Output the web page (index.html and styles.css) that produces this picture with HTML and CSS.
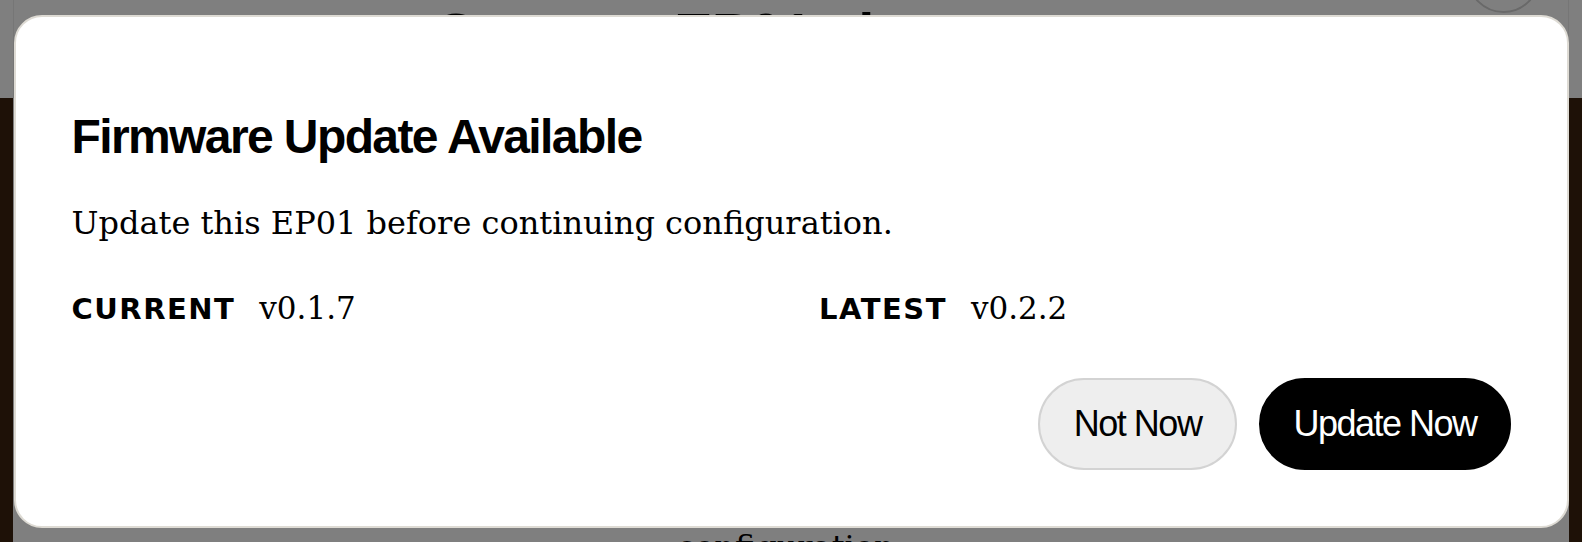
FILE: index.html
```html
<!DOCTYPE html>
<html lang="en">
<head>
<meta charset="utf-8">
<title>Firmware Update Available</title>
<link rel="stylesheet" href="styles.css">
</head>
<body>
<div class="page">
  <header class="page-head">
    <div class="page-head-inner">
      <h1 class="page-title">Connect EP01 via app now</h1>
      <span class="page-close"></span>
    </div>
  </header>
  <main class="page-body">
    <div class="panel">
      <p class="panel-text">configuration.</p>
    </div>
  </main>
</div>

<div class="overlay">
  <section class="modal" role="dialog" aria-labelledby="fw-title">
    <h2 class="modal-title" id="fw-title">Firmware Update Available</h2>
    <p class="modal-text">Update this EP01 before continuing configuration.</p>
    <div class="versions">
      <div class="version">
        <span class="version-label">CURRENT</span>
        <span class="version-value">v0.1.7</span>
      </div>
      <div class="version">
        <span class="version-label">LATEST</span>
        <span class="version-value">v0.2.2</span>
      </div>
    </div>
    <div class="actions">
      <button class="btn btn-secondary" type="button">Not Now</button>
      <button class="btn btn-primary" type="button">Update Now</button>
    </div>
  </section>
</div>
</body>
</html>
```
FILE: styles.css
```css
html, body {
  margin: 0;
  padding: 0;
  height: 100%;
  overflow: hidden;
}

body {
  background: #3c230f;
  font-family: "Liberation Sans", Arial, sans-serif;
  color: #000;
}

.page {
  height: 542px;
  display: flex;
  flex-direction: column;
}

.page-head {
  height: 98px;
  flex: none;
  background: #fff;
  padding: 0 13px;
  box-sizing: border-box;
}

.page-head-inner {
  position: relative;
  height: 100%;
  border-left: 1px solid #ededed;
  border-right: 1px solid #ededed;
  text-align: center;
  overflow: hidden;
}

.page-title {
  margin: 0;
  padding-top: 5px;
  font-family: "Liberation Sans", Arial, sans-serif;
  font-weight: 700;
  font-size: 58px;
  line-height: 1;
  letter-spacing: -1px;
  white-space: nowrap;
}

.page-close {
  position: absolute;
  right: 28px;
  top: -60px;
  width: 73px;
  height: 73px;
  border: 2px solid #d2d2d2;
  border-radius: 50%;
  box-sizing: border-box;
}

.page-body {
  flex: 1;
  padding: 0 13px;
}

.panel {
  height: 100%;
  background: #fff;
  text-align: center;
}

.panel-text {
  margin: 0;
  padding-top: 428px;
  font-family: "DejaVu Serif", "Liberation Serif", serif;
  font-size: 32px;
  line-height: 42px;
}

.overlay {
  position: fixed;
  inset: 0;
  background: rgba(0, 0, 0, 0.5);
  display: flex;
  align-items: center;
  justify-content: center;
}

.modal {
  width: 1555px;
  box-sizing: border-box;
  background: #fff;
  border: 2px solid #dedbd4;
  border-radius: 28px;
  padding: 92px 56px 56px;
}

.modal-title {
  margin: 0;
  font-family: "Liberation Sans", Arial, sans-serif;
  font-weight: 700;
  font-size: 48px;
  line-height: 56px;
  letter-spacing: -1.6px;
}

.modal-text {
  margin: 37px 0 0;
  font-family: "DejaVu Serif", "Liberation Serif", serif;
  font-size: 32px;
  line-height: 42px;
}

.versions {
  margin-top: 43px;
  display: grid;
  grid-template-columns: 1fr 1fr;
  column-gap: 56px;
  line-height: 42px;
}

.version {
  display: flex;
  align-items: baseline;
  gap: 24px;
}

.version-label {
  font-family: "DejaVu Sans", "Liberation Sans", sans-serif;
  font-weight: 700;
  font-size: 29px;
  letter-spacing: 1.5px;
}

.version-value {
  font-family: "DejaVu Serif", "Liberation Serif", serif;
  font-size: 31px;
}

.actions {
  margin-top: 48px;
  display: flex;
  justify-content: flex-end;
  gap: 22px;
}

.btn {
  height: 92px;
  padding: 0 34px;
  border-radius: 46px;
  border: 2px solid;
  box-sizing: border-box;
  font-family: "Liberation Sans", Arial, sans-serif;
  font-size: 36px;
  font-weight: 400;
  letter-spacing: -1.5px;
  cursor: pointer;
}

.btn-secondary {
  background: #eeeeee;
  border-color: #d3d3d3;
  color: #000;
}

.btn-primary {
  padding: 0 32px;
  background: #000;
  border-color: #000;
  color: #fff;
}
```
